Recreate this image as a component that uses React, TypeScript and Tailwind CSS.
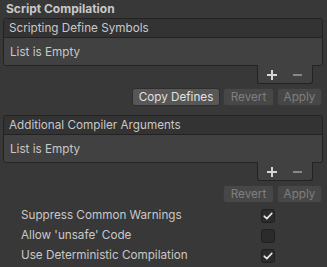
import React from "react";

const font = { fontFamily: "Inter, 'Noto Sans', sans-serif" };

function Check() {
  return (
    <svg width="10" height="8" viewBox="0 0 10 8" fill="none">
      <path d="M1.2 4.2 L3.8 6.6 L8.8 1.4" stroke="#e8e8e8" strokeWidth="1.6" strokeLinecap="round" strokeLinejoin="round" />
    </svg>
  );
}

function PlusMinus() {
  return (
    <svg width="40" height="12" viewBox="0 0 40 12">
      <rect x="0" y="5" width="10" height="2" fill="#d6d6d6" />
      <rect x="4" y="1" width="2" height="10" fill="#d6d6d6" />
      <rect x="26" y="5" width="9" height="2" fill="#878787" />
    </svg>
  );
}

function ListBox({ title }: { title: string }) {
  return (
    <div className="flex flex-col">
      <div className="ml-[3px] mr-[4px] rounded-[3px] border border-[#232323] overflow-hidden">
        <div className="h-[19px] bg-[#333333] border-b border-[#232323] pl-[5px] text-[11.7px] leading-[19px] text-[#c8c8c8]">
          {title}
        </div>
        <div className="h-[27px] bg-[#414141] pl-[6px] text-[11.7px] leading-[28px] text-[#c8c8c8]">
          List is Empty
        </div>
      </div>
      <div className="flex justify-end pr-[14px]">
        <div className="w-[56px] h-[19px] -mt-px border border-t-0 border-[#232323] rounded-b-[3px] bg-[#414141] flex items-center pl-[9px] pt-[1px]">
          <PlusMinus />
        </div>
      </div>
    </div>
  );
}

function Btn({ label, enabled, w }: { label: string; enabled?: boolean; w: string }) {
  return (
    <div
      className={
        "h-[18px] rounded-[3px] border text-[11.7px] leading-[16px] text-center " +
        w +
        (enabled
          ? " bg-[#575757] border-[#2e2e2e] text-[#e0e0e0]"
          : " bg-[#474747] border-[#3a3a3a] text-[#7f7f7f]")
      }
    >
      {label}
    </div>
  );
}

function Row({ label, checked }: { label: string; checked: boolean }) {
  return (
    <div className="h-[20px] flex items-center pl-[21px] pr-[52px]">
      <span className="flex-1 text-[11.7px] text-[#c8c8c8]">{label}</span>
      <div className="w-[14px] h-[14px] rounded-[3px] bg-[#2b2b2b] border border-[#1f1f1f] flex items-center justify-center">
        {checked ? <Check /> : null}
      </div>
    </div>
  );
}

export default function App() {
  return (
    <div className="w-[327px] h-[267px] bg-[#383838] overflow-hidden" style={font}>
      <div className="h-[18px] pl-[6px] text-[12px] font-bold leading-[18px] text-[#c8c8c8]">Script Compilation</div>
      <ListBox title="Scripting Define Symbols" />
      <div className="flex justify-end gap-[3px] pr-[5px] mt-[4px]">
        <Btn label="Copy Defines" enabled w="w-[88px]" />
        <Btn label="Revert" w="w-[51px]" />
        <Btn label="Apply" w="w-[45px]" />
      </div>
      <div className="mt-[9px]">
        <ListBox title="Additional Compiler Arguments" />
      </div>
      <div className="flex justify-end gap-[3px] pr-[5px] mt-[4px]">
        <Btn label="Revert" w="w-[51px]" />
        <Btn label="Apply" w="w-[45px]" />
      </div>
      <div className="mt-[3px] flex flex-col">
        <Row label="Suppress Common Warnings" checked />
        <Row label="Allow 'unsafe' Code" checked={false} />
        <Row label="Use Deterministic Compilation" checked />
      </div>
    </div>
  );
}
